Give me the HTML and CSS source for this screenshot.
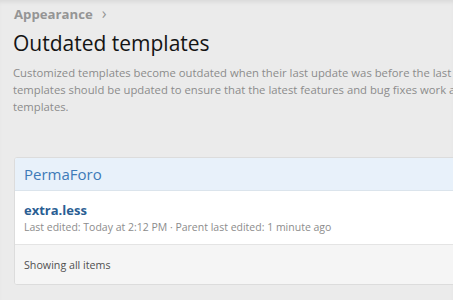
FILE: index.html
```html
<!DOCTYPE html>
<html lang="en">
<head>
<meta charset="utf-8">
<title>Outdated templates</title>
<link rel="stylesheet" href="styles.css">
</head>
<body>
<div class="page">
  <div class="breadcrumb"><a>Appearance</a><span class="sep">›</span></div>
  <h1 class="title">Outdated templates</h1>
  <p class="desc">Customized templates become outdated when their last update was before the last time the parent template was modified. Outdated<br>templates should be updated to ensure that the latest features and bug fixes work as expected with your customized<br>templates.</p>
  <div class="block">
    <h2 class="block-header">PermaForo</h2>
    <div class="block-row">
      <a class="item-title">extra.less</a>
      <div class="item-meta">Last edited: Today at 2:12 PM · Parent last edited: 1 minute ago</div>
    </div>
    <div class="block-footer">Showing all items</div>
  </div>
</div>
</body>
</html>
```
FILE: styles.css
```css
html, body {
  margin: 0;
  padding: 0;
  background: #ebebeb;
  overflow: hidden;
}
body {
  font-family: "Open Sans", "Noto Sans", sans-serif;
  color: #141414;
  box-shadow: inset 0 4px 4px -2px rgba(0,0,0,0.08);
  height: 300px;
}
.page {
  width: 760px;
  padding: 4px 0 0 14px;
}
.breadcrumb {
  display: flex;
  align-items: center;
  gap: 9px;
  font-size: 13.2px;
  font-weight: 700;
  color: #959595;
  height: 20px;
}
.breadcrumb .sep {
  font-size: 16px;
  font-weight: 400;
  margin-top: -2px;
}
.title {
  margin: 5px 0 0 -1px;
  font-size: 21px;
  font-weight: 400;
  line-height: 28px;
  color: #141414;
}
.desc {
  margin: 7px 0 0 -1px;
  font-size: 11.3px;
  line-height: 17px;
  color: #8c8c8c;
  white-space: nowrap;
}
.block {
  margin-top: 42px;
  background: #fff;
  border: 1px solid #dcdcdc;
  border-radius: 3px;
  overflow: hidden;
}
.block-header {
  margin: 0;
  padding: 0 9px;
  height: 32px;
  line-height: 32px;
  background: #e8f1fa;
  border-bottom: 1px solid #dbe4ec;
  font-size: 15px;
  font-weight: 400;
  color: #3d7ab8;
}
.block-row {
  padding: 10px 9px 8px;
  border-bottom: 1px solid #e4e4e4;
}
.item-title {
  display: block;
  font-size: 13px;
  font-weight: 700;
  color: #2a5e93;
  line-height: 18px;
}
.item-meta {
  font-size: 10.5px;
  color: #8c8c8c;
  line-height: 17px;
}
.block-footer {
  padding: 0 9px;
  height: 39px;
  line-height: 41px;
  background: #f5f5f5;
  font-size: 10.7px;
  color: #505050;
}
```
